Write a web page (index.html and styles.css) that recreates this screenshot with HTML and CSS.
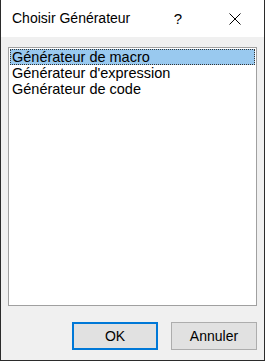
FILE: index.html
```html
<!DOCTYPE html>
<html lang="fr">
<head>
  <meta charset="UTF-8">
  <title>Choisir Générateur</title>
  <link rel="stylesheet" href="styles.css">
</head>
<body>
  <div class="dialog">
    <header class="titlebar">
      <span class="title">Choisir Générateur</span>
      <span class="help">?</span>
      <span class="close">
        <svg width="12" height="12" viewBox="0 0 12 12">
          <path d="M0.5 0.5 L11.5 11.5 M11.5 0.5 L0.5 11.5" stroke="#000" stroke-width="1" fill="none"/>
        </svg>
      </span>
    </header>

    <main class="content">
      <ul class="listbox">
        <li class="item selected">Générateur de macro</li>
        <li class="item">Générateur d'expression</li>
        <li class="item">Générateur de code</li>
      </ul>

      <div class="actions">
        <button class="btn btn-default">OK</button>
        <button class="btn">Annuler</button>
      </div>
    </main>
  </div>
</body>
</html>
```

FILE: styles.css
```css
:root {
  --frame: #2b2b2b;
  --face: #f0f0f0;
  --btn-face: #e1e1e1;
  --btn-border: #adadad;
  --accent: #0078d7;
  --select: #99c9ef;
  --font: "Liberation Sans", Arial, sans-serif;
}
* {
  box-sizing: border-box;
}
body {
  margin: 0;
  font-family: var(--font);
  color: #000;
}
.dialog {
  width: 265px;
  height: 361px;
  display: flex;
  flex-direction: column;
  border: 1px solid var(--frame);
  border-top: none;
  background: var(--face);
}
/* Title bar */
.titlebar {
  height: 37px;
  background: #fff;
  display: flex;
  align-items: center;
  padding-left: 11px;
}
.title {
  font-size: 14px;
  flex: 1;
  padding-bottom: 1px;
}
.help {
  font-size: 15px;
  width: 46px;
  margin-right: 11px;
  text-align: center;
  padding-bottom: 1px;
}
.close {
  width: 46px;
  height: 37px;
  display: flex;
  align-items: center;
  justify-content: center;
  margin-right: 6px;
}
/* Body */
.content {
  flex: 1;
  display: flex;
  flex-direction: column;
  padding: 10px 7px 9px 7px;
}
.listbox {
  list-style: none;
  margin: 0;
  padding: 1px;
  height: 259px;
  background: #fff;
  border: 1px solid #a0a0a0;
}
.item {
  height: 16px;
  line-height: 16px;
  font-size: 14.5px;
  padding-left: 2px;
  white-space: nowrap;
}
.item.selected {
  background: var(--select);
  outline: 1px dotted #333;
  outline-offset: -1px;
}
.actions {
  margin-top: 16px;
  display: flex;
  justify-content: flex-end;
  gap: 13px;
}
.btn {
  flex: none;
  width: 86px;
  height: 28px;
  font-family: var(--font);
  font-size: 14px;
  background: var(--btn-face);
  border: 1px solid var(--btn-border);
  color: #000;
  padding: 0;
}
.btn-default {
  border: 2px solid var(--accent);
}
```
